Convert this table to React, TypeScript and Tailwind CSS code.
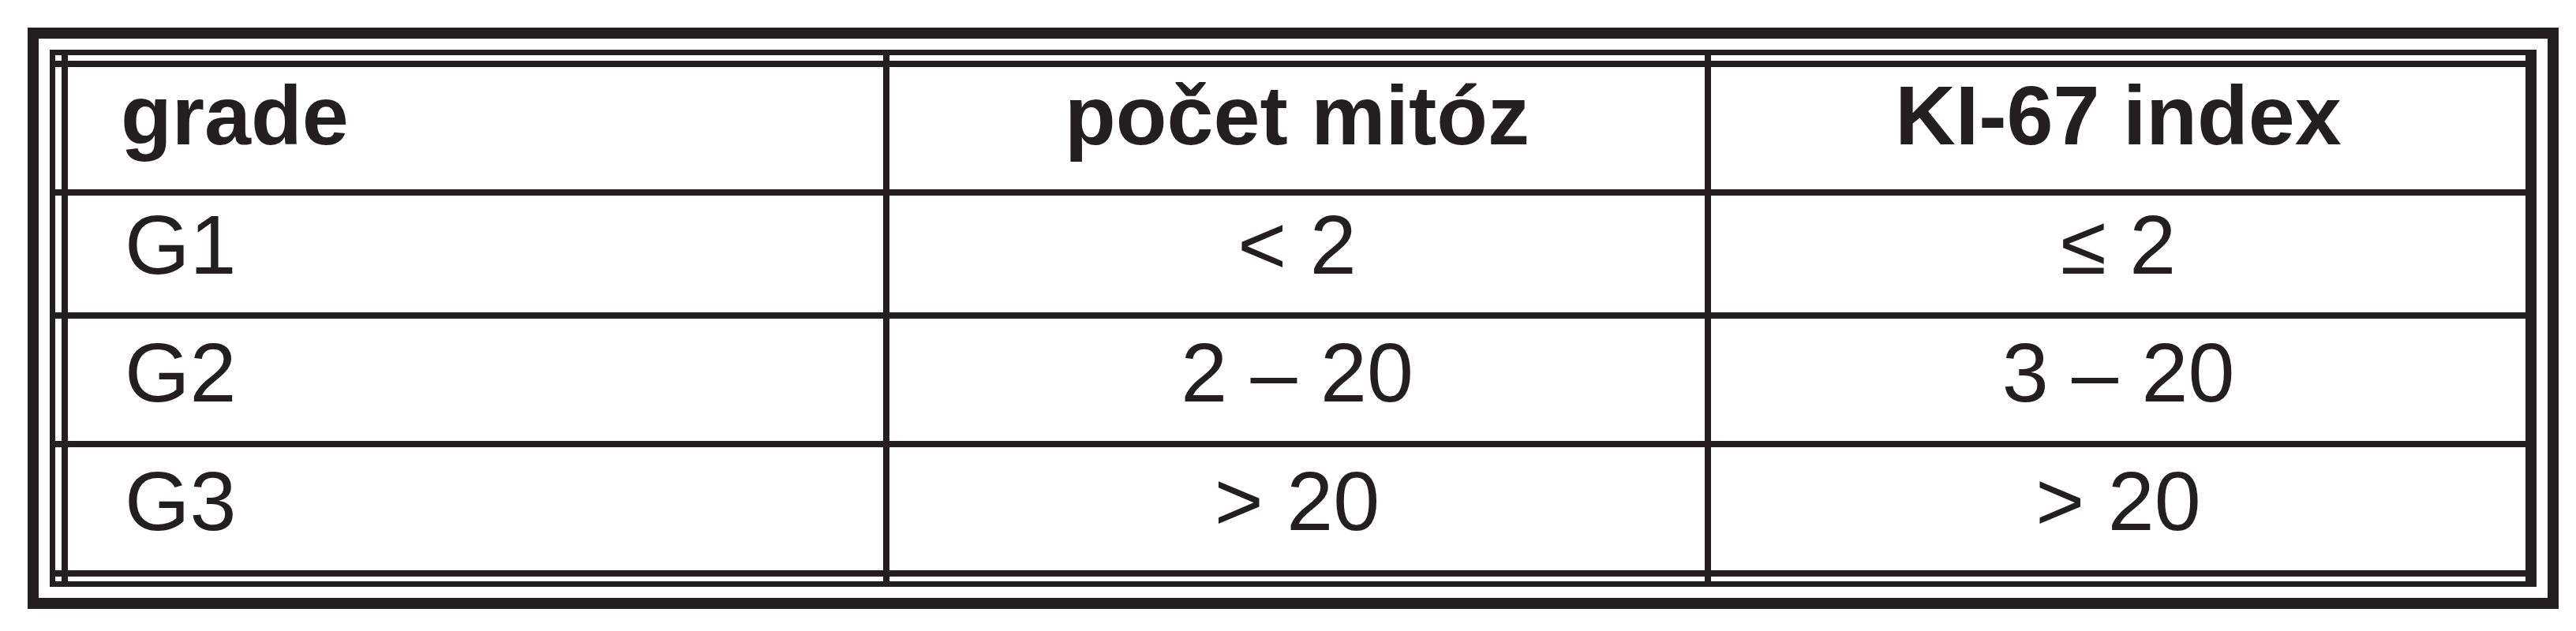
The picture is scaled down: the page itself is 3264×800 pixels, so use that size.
const rows = [
  { cells: ["grade", "počet mitóz", "KI-67 index"], head: true, pad: "pt-[8px]" },
  { cells: ["G1", "< 2", "≤ 2"], head: false, pad: "pt-[9px]" },
  { cells: ["G2", "2 – 20", "3 – 20"], head: false, pad: "pt-[15px]" },
  { cells: ["G3", "> 20", "> 20"], head: false, pad: "pt-[15px]" },
];

// white filler cell; the black grid gaps between them draw the rules
function Strip() {
  return <div className="bg-white" />;
}

export default function App() {
  return (
    <div className="min-h-[800px] bg-white pl-[35px] pt-[35px] font-['Liberation_Sans',Arial,sans-serif] text-[#231f20]">
      <div className="w-fit border-[14px] border-[#231f20] bg-white p-[14px]">
        {/* right side has no gap strip, so the double rule merges into one thick line */}
        <div className="grid grid-cols-[8px_1033px_1033px_1032px] grid-rows-[7px_155px_148px_155px_156px_6px] gap-[8px] bg-[#231f20] p-[7px] pr-[14px]">
          <Strip />
          <Strip />
          <Strip />
          <Strip />

          {rows.map((row, i) => (
            <div key={i} className="contents">
              <Strip />
              <div
                className={`bg-white text-[106px] leading-none ${row.pad} ${
                  row.head ? "pl-[67px] font-bold" : "pl-[72px]"
                }`}
              >
                {row.cells[0]}
              </div>
              <div className={`bg-white text-center text-[106px] leading-none ${row.pad} ${row.head ? "font-bold" : ""}`}>
                {row.cells[1]}
              </div>
              <div className={`bg-white text-center text-[106px] leading-none ${row.pad} ${row.head ? "font-bold" : ""}`}>
                {row.cells[2]}
              </div>
            </div>
          ))}

          <Strip />
          <Strip />
          <Strip />
          <Strip />
        </div>
      </div>
    </div>
  );
}
